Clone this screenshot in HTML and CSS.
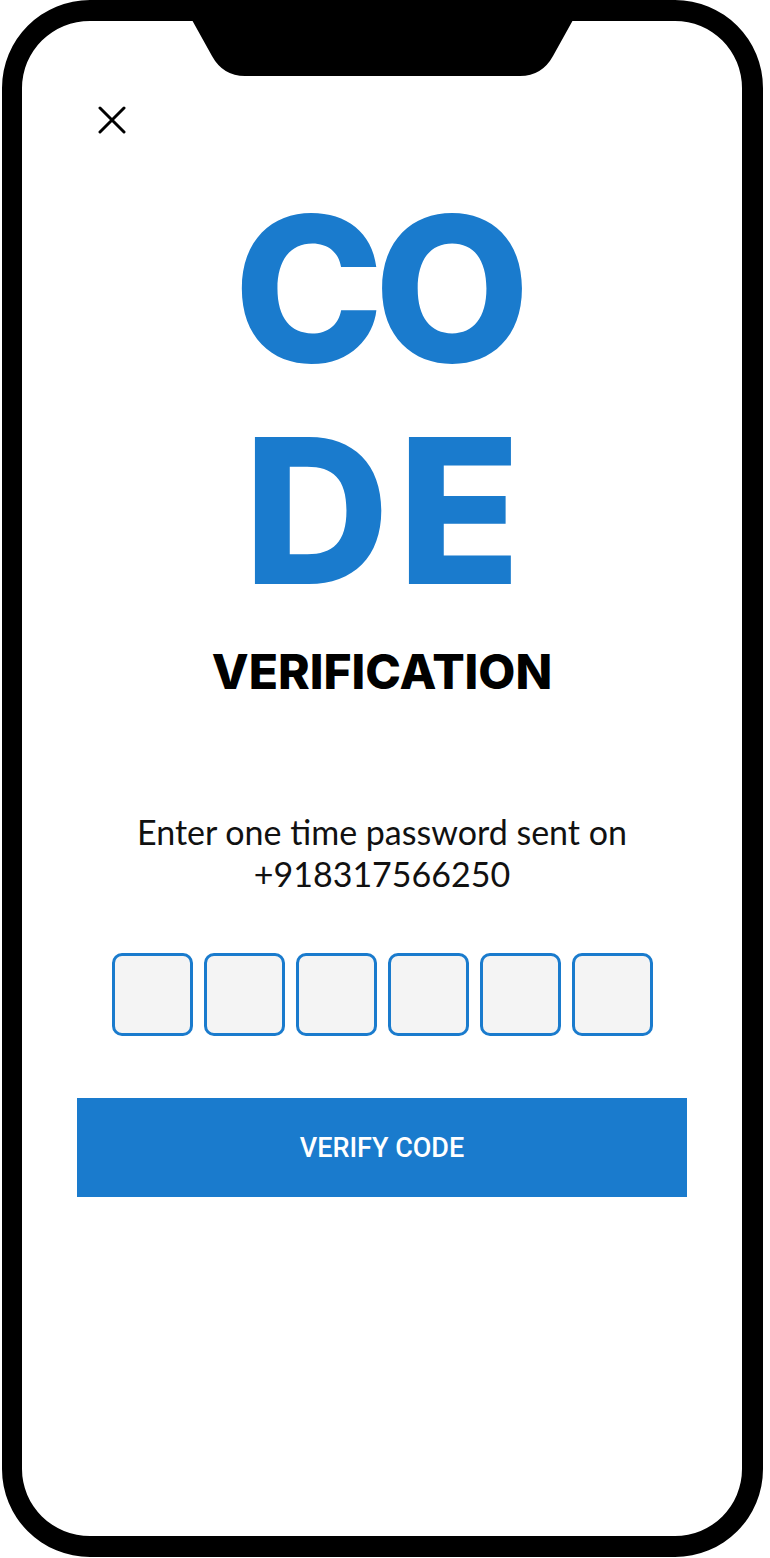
FILE: index.html
```html
<!DOCTYPE html>
<html lang="en">
<head>
<meta charset="utf-8">
<title>Code Verification</title>
<link rel="stylesheet" href="styles.css">
</head>
<body>
<div class="phone">
  <svg class="notch" width="381" height="57" viewBox="0 0 381 57" aria-hidden="true">
    <path d="M0 0 H381 L361 36 Q350 56 328 56 H53 Q31 56 20 36 Z" fill="#000"/>
  </svg>
  <main class="screen">
    <button class="close" aria-label="Close">
      <svg width="28" height="28" viewBox="0 0 28 28" aria-hidden="true">
        <path d="M2 2 L26 26 M26 2 L2 26" stroke="#000" stroke-width="3" stroke-linecap="round" fill="none"/>
      </svg>
    </button>
    <h1 class="title"><span class="l1">CO</span><br><span class="l2">DE</span></h1>
    <h2 class="subtitle">VERIFICATION</h2>
    <p class="hint">Enter one time password sent on<br>+918317566250</p>
    <div class="otp">
      <input class="otp-box" type="text" maxlength="1" aria-label="Digit 1">
      <input class="otp-box" type="text" maxlength="1" aria-label="Digit 2">
      <input class="otp-box" type="text" maxlength="1" aria-label="Digit 3">
      <input class="otp-box" type="text" maxlength="1" aria-label="Digit 4">
      <input class="otp-box" type="text" maxlength="1" aria-label="Digit 5">
      <input class="otp-box" type="text" maxlength="1" aria-label="Digit 6">
    </div>
    <button class="verify">VERIFY CODE</button>
  </main>
</div>
</body>
</html>
```

FILE: styles.css
```css
* { box-sizing: border-box; }

html, body {
  margin: 0;
  padding: 0;
  background: #fff;
}

.phone {
  position: relative;
  width: 761px;
  height: 1557px;
  margin-left: 2px;
  border: 21px solid #000;
  border-left-width: 20px;
  border-radius: 88px;
  background: #fff;
  overflow: visible;
}

.notch {
  position: absolute;
  left: 170px;
  top: -1px;
  display: block;
}

.screen {
  display: flex;
  flex-direction: column;
  align-items: center;
}

.close {
  align-self: flex-start;
  margin: 85px 0 0 76px;
  padding: 0;
  border: 0;
  background: none;
  width: 28px;
  height: 28px;
  display: block;
}
.close svg { display: block; }

.title {
  margin: 44px 0 0;
  font-family: Inter, "Noto Sans", sans-serif;
  font-weight: 800;
  font-size: 202px;
  line-height: 222px;
  color: #1a7bcd;
  text-align: center;
}
.title .l1 { letter-spacing: -10px; margin-right: 10px; }
.title .l2 { letter-spacing: 8px; margin-right: -8px; }

.subtitle {
  margin: 21px 0 0;
  font-family: Inter, "Noto Sans", sans-serif;
  font-weight: 800;
  font-size: 48px;
  line-height: 58px;
  color: #000;
  text-align: center;
}

.hint {
  margin: 110px 0 0;
  font-family: Lato, "Open Sans", sans-serif;
  font-weight: 400;
  font-size: 34px;
  line-height: 42px;
  color: #111;
  text-align: center;
}

.otp {
  display: flex;
  gap: 11px;
  margin-top: 58px;
}

.otp-box {
  width: 81px;
  height: 83px;
  border: 3px solid #1a7bcd;
  border-radius: 10px;
  background: #f4f4f4;
  padding: 0;
  font: inherit;
}

.verify {
  margin-top: 62px;
  width: 610px;
  height: 99px;
  border: 0;
  background: #1a7bcd;
  color: #fff;
  font-family: Roboto, "Noto Sans", sans-serif;
  font-weight: 500;
  font-size: 27px;
  padding: 0;
}
```
